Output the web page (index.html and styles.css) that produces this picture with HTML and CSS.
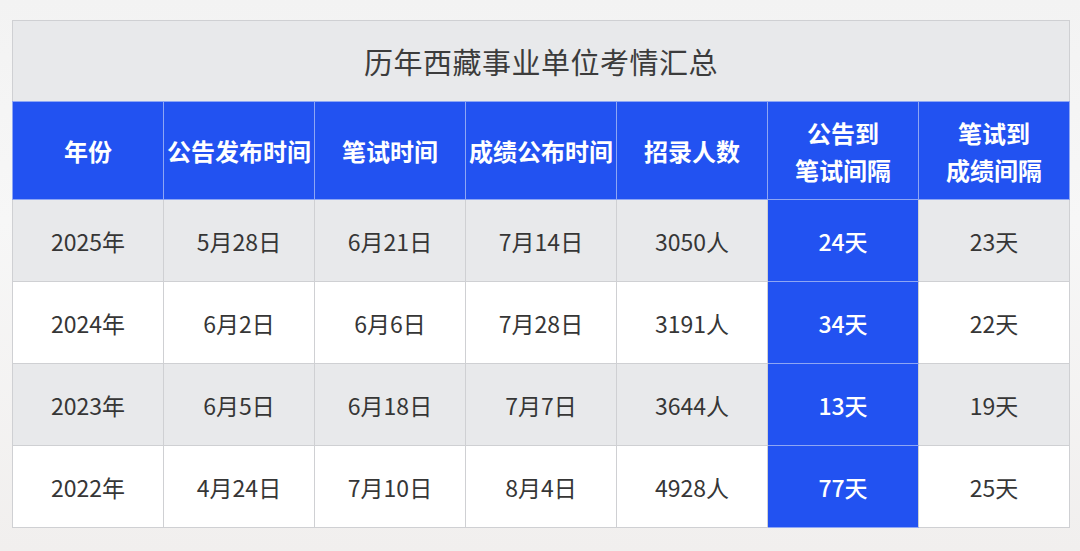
FILE: index.html
```html
<!DOCTYPE html>
<html lang="zh">
<head>
<meta charset="utf-8">
<link rel="stylesheet" href="styles.css">
</head>
<body>
<div class="page">
  <table class="grid">
    <colgroup>
      <col class="c"><col class="c"><col class="c"><col class="c"><col class="c"><col class="c"><col class="c">
    </colgroup>
    <thead>
      <tr class="title-row"><th colspan="7" class="title">历年西藏事业单位考情汇总</th></tr>
      <tr class="head-row">
        <th>年份</th>
        <th>公告发布时间</th>
        <th>笔试时间</th>
        <th>成绩公布时间</th>
        <th>招录人数</th>
        <th>公告到<br>笔试间隔</th>
        <th>笔试到<br>成绩间隔</th>
      </tr>
    </thead>
    <tbody>
      <tr class="alt">
        <td>2025年</td><td>5月28日</td><td>6月21日</td><td>7月14日</td><td>3050人</td><td class="hl">24天</td><td>23天</td>
      </tr>
      <tr>
        <td>2024年</td><td>6月2日</td><td>6月6日</td><td>7月28日</td><td>3191人</td><td class="hl">34天</td><td>22天</td>
      </tr>
      <tr class="alt">
        <td>2023年</td><td>6月5日</td><td>6月18日</td><td>7月7日</td><td>3644人</td><td class="hl">13天</td><td>19天</td>
      </tr>
      <tr>
        <td>2022年</td><td>4月24日</td><td>7月10日</td><td>8月4日</td><td>4928人</td><td class="hl">77天</td><td>25天</td>
      </tr>
    </tbody>
  </table>
</div>
</body>
</html>
```

FILE: styles.css
```css
html, body {
  margin: 0;
  padding: 0;
}
body {
  width: 1080px;
  height: 551px;
  overflow: hidden;
  background: linear-gradient(180deg, #f3f3f3 0%, #f7f7f7 40%, #f1efee 100%);
  font-family: "Noto Sans CJK SC", "Noto Sans", sans-serif;
}
.page {
  padding: 20px 11px 0 12px;
}
.grid {
  width: 1057px;
  border-collapse: collapse;
  table-layout: fixed;
  background: #ffffff;
}
.c {
  width: 151px;
}
.grid th, .grid td {
  text-align: center;
  vertical-align: middle;
  padding: 0;
  border: 1px solid #cfd0d3;
}
.title-row th.title {
  height: 80px;
  background: #e8e9eb;
  color: #3c3c3c;
  font-size: 29px;
  font-weight: 400;
  letter-spacing: 0.5px;
  border-bottom: 1px solid #8ea6f4;
}
.head-row th {
  height: 97px;
  background: #2252f1;
  color: #ffffff;
  font-size: 24px;
  font-weight: 700;
  line-height: 37px;
  border-color: #8ea6f4;
}
.grid td {
  height: 81px;
  font-size: 23px;
  color: #363636;
  font-weight: 400;
}
.grid tr.alt td {
  background: #e8e9eb;
}
.grid td.hl, .grid tr.alt td.hl {
  background: #2252f1;
  color: #ffffff;
  font-weight: 500;
  border-left-color: #2252f1;
  border-right-color: #cfd0d3;
  border-top-color: #8ea6f4;
  border-bottom-color: #8ea6f4;
}
```
